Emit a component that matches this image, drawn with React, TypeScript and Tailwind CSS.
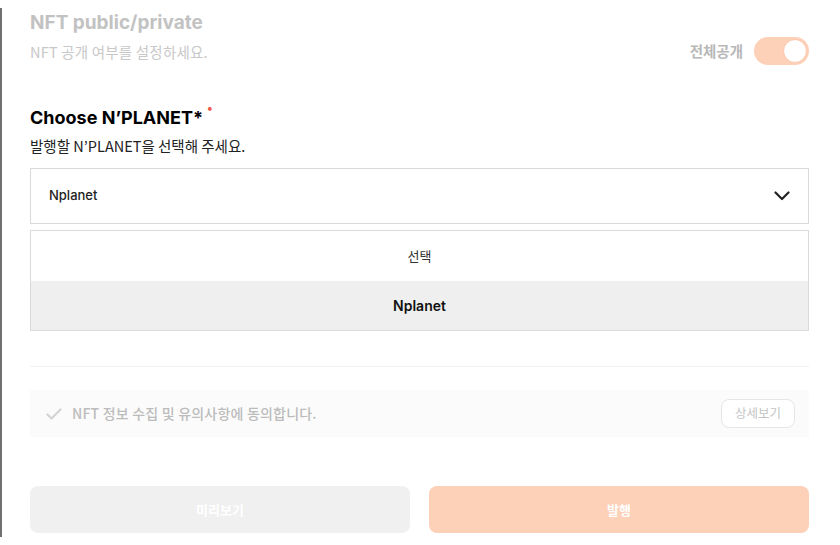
const latin = '"Inter", "Noto Sans CJK KR", sans-serif'
const kr = '"Noto Sans CJK KR", "Inter", sans-serif'

function Toggle() {
  return (
    <div className="flex h-[28px] w-[55px] items-center justify-end rounded-full bg-[#fdd0b8] p-[2px]">
      <div className="h-[24px] w-[24px] rounded-full border border-[#fcc4a6] bg-white" />
    </div>
  )
}

export default function App() {
  return (
    <main className="flex h-[545px] w-[840px] bg-white">
      {/* left edge of the modal */}
      <div className="my-[8px] w-[2px] bg-[#707070]" />

      <div className="flex flex-1 flex-col pl-[28px] pr-[31px]">
        {/* public / private */}
        <div className="flex h-[62px] items-start justify-between pt-[10px]">
          <div className="flex flex-col">
            <h2 className="text-[19px] font-bold leading-[26px] text-[#c2c2c2]" style={{ fontFamily: latin }}>
              NFT public/private
            </h2>
            <p className="mt-[6px] text-[14.5px] leading-[20px] tracking-[0.2px] text-[#c8c8c8]" style={{ fontFamily: kr }}>
              NFT 공개 여부를 설정하세요.
            </p>
          </div>
          <div className="mt-[27px] flex items-center gap-[11px]">
            <span className="text-[14.5px] font-bold text-[#b8b8b8]" style={{ fontFamily: kr }}>
              전체공개
            </span>
            <Toggle />
          </div>
        </div>

        {/* choose planet */}
        <h2 className="mt-[44px] flex items-start text-[18px] font-bold leading-[24px] text-black" style={{ fontFamily: latin }}>
          Choose N’PLANET*
          <span className="ml-[4px] mt-[-4px] text-[12px] leading-[12px] text-[#f0584a]">•</span>
        </h2>
        <p className="mt-[6px] text-[14.5px] leading-[20px] text-[#222]" style={{ fontFamily: kr }}>
          발행할 N’PLANET을 선택해 주세요.
        </p>

        <div className="mt-[12px] flex h-[56px] items-center justify-between border border-[#d9d9d9] pl-[18px] pr-[18px]">
          <span className="text-[13px] font-medium text-[#222]" style={{ fontFamily: latin }}>
            Nplanet
          </span>
          <svg width="16" height="10" viewBox="0 0 16 10" fill="none">
            <path d="M1.5 1.5 8 8l6.5-6.5" stroke="#222" strokeWidth="2.2" strokeLinecap="round" strokeLinejoin="round" />
          </svg>
        </div>

        <ul className="mt-[6px] border border-[#d9d9d9]">
          <li className="flex h-[50px] items-center justify-center text-[13px] text-[#333]" style={{ fontFamily: kr }}>
            선택
          </li>
          <li className="flex h-[49px] items-center justify-center bg-[#efefef] text-[14px] font-semibold text-[#111]" style={{ fontFamily: latin }}>
            Nplanet
          </li>
        </ul>

        <div className="mt-[35px] h-px bg-[#f1f1f1]" />

        {/* agreement */}
        <div className="mt-[23px] flex h-[47px] items-center justify-between bg-[#fbfbfb] pl-[16px] pr-[14px]">
          <div className="flex items-center gap-[10px]">
            <svg width="16" height="12" viewBox="0 0 16 12" fill="none">
              <path d="M1.5 6.5 5.5 10.5 14.5 1.5" stroke="#d4d4d4" strokeWidth="2.2" strokeLinecap="round" strokeLinejoin="round" />
            </svg>
            <span className="text-[14px] font-medium tracking-[0.2px] text-[#bcbcbc]" style={{ fontFamily: kr }}>
              NFT 정보 수집 및 유의사항에 동의합니다.
            </span>
          </div>
          <button className="h-[29px] rounded-[8px] border border-[#e6e6e6] bg-white px-[13px] text-[12.5px] text-[#c4c4c4]" style={{ fontFamily: kr }}>
            상세보기
          </button>
        </div>

        {/* actions */}
        <div className="mt-[49px] grid grid-cols-2 gap-[19px]">
          <button className="h-[47px] rounded-[8px] bg-[#f0f0f0] text-[13px] font-bold text-white" style={{ fontFamily: kr }}>
            미리보기
          </button>
          <button className="h-[47px] rounded-[8px] bg-[#fdd0b8] text-[13px] font-bold text-white" style={{ fontFamily: kr }}>
            발행
          </button>
        </div>
      </div>
    </main>
  )
}
